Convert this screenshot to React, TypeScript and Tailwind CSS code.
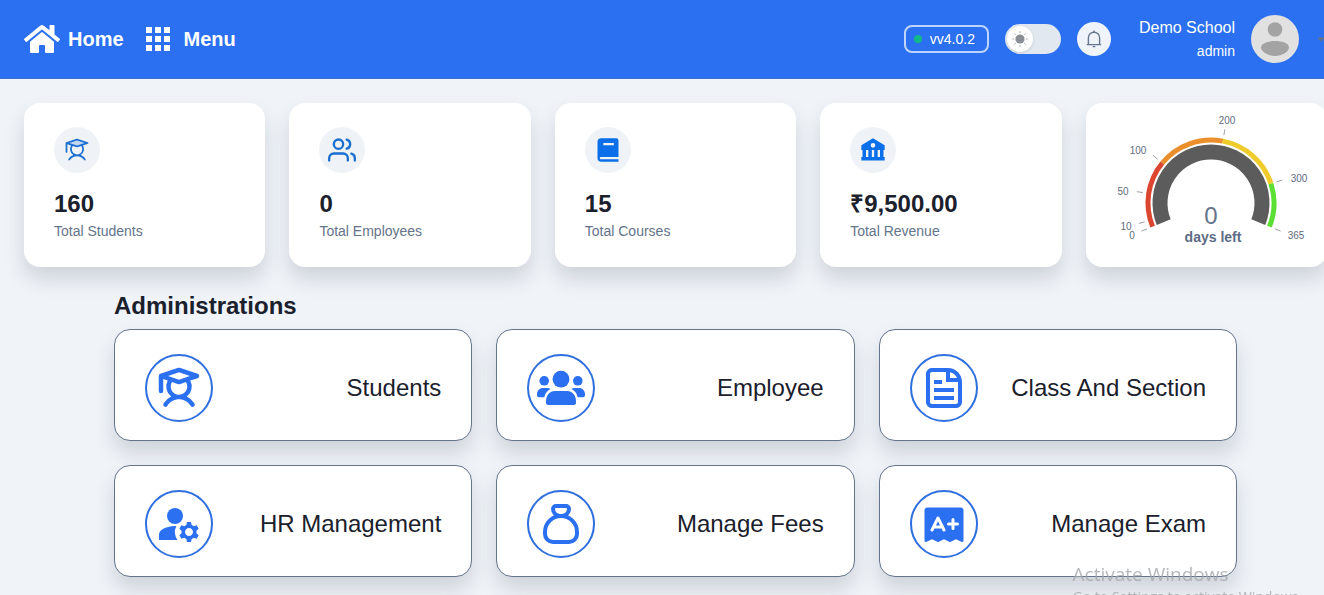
import type { ComponentType } from "react";
import type { IconType } from "react-icons";
import { BiSolidBank, BiSolidBook } from "react-icons/bi";
import { CgFileDocument } from "react-icons/cg";
import { FaCaretDown, FaHome } from "react-icons/fa";
import { FiUsers } from "react-icons/fi";
import { MdManageAccounts } from "react-icons/md";
import { PiExamFill, PiStudentBold, PiStudentDuotone } from "react-icons/pi";
import { TbMoneybag } from "react-icons/tb";

const stats: { icon: IconType; value: string; label: string; color: string }[] = [
  { icon: PiStudentDuotone, value: "160", label: "Total Students", color: "text-[#1a6fd0]" },
  { icon: FiUsers, value: "0", label: "Total Employees", color: "text-[#1a6fd0]" },
  { icon: BiSolidBook, value: "15", label: "Total Courses", color: "text-[#0a6fe8]" },
  { icon: BiSolidBank, value: "₹9,500.00", label: "Total Revenue", color: "text-[#0a6fe8]" },
];

type ModuleIcon = ComponentType<{ className?: string }>;

const modules: { icon: ModuleIcon; title: string }[] = [
  { icon: PiStudentBold, title: "Students" },
  { icon: TeamIcon, title: "Employee" },
  { icon: CgFileDocument, title: "Class And Section" },
  { icon: MdManageAccounts, title: "HR Management" },
  { icon: TbMoneybag, title: "Manage Fees" },
  { icon: PiExamFill, title: "Manage Exam" },
];

export default function App() {
  return (
    <div className="h-screen overflow-hidden bg-[#f0f4f9] font-['Liberation_Sans',Arial,sans-serif] text-[#1a202c]">
      <div className="w-[calc(100%+27px)]">
        <Header />
        <main className="px-6 pt-6">
          <section className="grid grid-cols-5 gap-6">
            {stats.map((s) => (
              <StatCard key={s.label} {...s} />
            ))}
            <div className="rounded-2xl bg-white shadow-[0_12px_20px_rgba(30,41,59,0.16)]">
              <Gauge value={0} max={365} />
            </div>
          </section>

          <section className="px-[90px] pt-6">
            <h2 className="mb-2 text-2xl leading-[30px] font-bold">Administrations</h2>
            <div className="grid grid-cols-3 gap-6">
              {modules.map((m) => (
                <ModuleCard key={m.title} {...m} />
              ))}
            </div>
          </section>
        </main>
      </div>

      <div className="pointer-events-none fixed right-[22px] bottom-0 h-8 font-['Open_Sans',sans-serif] whitespace-nowrap text-[#a3a6aa]/80">
        <div className="text-[19px] leading-[22px]">Activate Windows</div>
        <div className="text-sm leading-6">Go to Settings to activate Windows.</div>
      </div>
    </div>
  );
}

function Header() {
  return (
    <header className="flex h-[79px] items-center justify-between border-b border-[#3b6fd0] bg-[#2a70f0] px-6 text-white">
      <nav className="flex items-center gap-[22px] text-xl font-bold">
        <a href="#home" className="flex items-center gap-2">
          <FaHome className="size-9" /> Home
        </a>
        <a href="#menu" className="flex items-center gap-3.5">
          <GridIcon /> Menu
        </a>
      </nav>

      <div className="flex items-center gap-4">
        <span className="flex h-7 items-center gap-2 rounded-lg border-2 border-white/70 px-2 text-sm">
          <span className="size-2 rounded-full bg-[#12b98a]" />
          <span className="pr-1">vv4.0.2</span>
        </span>
        <button
          aria-label="Toggle theme"
          className="flex h-[30px] w-14 items-center rounded-full bg-[#e2e8f0] px-0.5"
        >
          <span className="flex size-[26px] items-center justify-center rounded-full bg-white shadow">
            <SunIcon />
          </span>
        </button>
        <button
          aria-label="Notifications"
          className="flex size-[34px] items-center justify-center rounded-full bg-[#eff4fb]"
        >
          <BellIcon />
        </button>
        <button aria-label="Account" className="ml-3 flex items-center gap-4 text-right">
          <span>
            <span className="block text-base leading-6">Demo School</span>
            <span className="block text-sm leading-[22px]">admin</span>
          </span>
          <Avatar />
          <FaCaretDown className="size-3 text-[#64748b]" />
        </button>
      </div>
    </header>
  );
}

function StatCard({
  icon: Icon,
  value,
  label,
  color,
}: {
  icon: IconType;
  value: string;
  label: string;
  color: string;
}) {
  return (
    <div className="rounded-2xl bg-white px-[30px] py-6 shadow-[0_12px_20px_rgba(30,41,59,0.16)]">
      <div className="flex size-[46px] items-center justify-center rounded-full bg-[#eff2f7]">
        <Icon className={`size-7 ${color}`} />
      </div>
      <div className="mt-4 text-2xl leading-[30px] font-bold">{value}</div>
      <div className="text-sm leading-6 text-[#64748b]">{label}</div>
    </div>
  );
}

function ModuleCard({ icon: Icon, title }: { icon: ModuleIcon; title: string }) {
  return (
    <a
      href="#module"
      className="flex items-center justify-between rounded-2xl border border-[#64748b] bg-white px-[30px] pt-6 pb-[18px] shadow-[0_12px_20px_rgba(30,41,59,0.16)]"
    >
      <span className="flex size-[68px] items-center justify-center rounded-full border-2 border-[#2f6fe0] text-[#2a70f0]">
        <Icon className="size-12" />
      </span>
      <span className="text-2xl">{title}</span>
    </a>
  );
}

/* Gauge: 224 degree sweep, opening at the bottom */
const CX = 125;
const CY = 100;

function polar(r: number, fraction: number) {
  const a = ((158 + 224 * fraction) * Math.PI) / 180;
  return { x: CX + r * Math.cos(a), y: CY + r * Math.sin(a) };
}

function arc(r: number, from: number, to: number) {
  const a = polar(r, from);
  const b = polar(r, to);
  const large = (to - from) * 224 > 180 ? 1 : 0;
  return `M${a.x} ${a.y}A${r} ${r} 0 ${large} 1 ${b.x} ${b.y}`;
}

const segments = [
  { from: 0, to: 100, color: "#dc4530" },
  { from: 100, to: 200, color: "#ea8f2c" },
  { from: 200, to: 300, color: "#efcb2c" },
  { from: 300, to: 365, color: "#5bdf33" },
];

const ticks = [
  { at: 0, x: 46, y: 136 },
  { at: 10, x: 40, y: 127 },
  { at: 50, x: 37, y: 92 },
  { at: 100, x: 52, y: 51 },
  { at: 200, x: 141, y: 21 },
  { at: 300, x: 213, y: 79 },
  { at: 365, x: 210, y: 136 },
];

function Gauge({ value, max }: { value: number; max: number }) {
  return (
    <svg width="241" height="164" viewBox="0 0 241 164" role="img" aria-label="Days left">
      {segments.map((s) => (
        <path
          key={s.from}
          d={arc(63, s.from / max, s.to / max)}
          fill="none"
          stroke={s.color}
          strokeWidth="5"
        />
      ))}
      <path d={arc(51, 0, 1)} fill="none" stroke="#5c5c5c" strokeWidth="15" />
      {ticks.map((t) => {
        const a = polar(69, t.at / max);
        const b = polar(75, t.at / max);
        return (
          <g key={t.at}>
            <line x1={a.x} y1={a.y} x2={b.x} y2={b.y} stroke="#9aa0a8" strokeWidth="1" />
            <text x={t.x} y={t.y} textAnchor="middle" fontSize="10" fill="#5f6b80">
              {t.at}
            </text>
          </g>
        );
      })}
      <text x="125" y="121" textAnchor="middle" fontSize="24" fill="#64748b">
        {value}
      </text>
      <text x="127" y="139" textAnchor="middle" fontSize="14" fontWeight="700" fill="#5b6b85">
        days left
      </text>
    </svg>
  );
}

function TeamIcon({ className }: { className?: string }) {
  return (
    <svg className={className} viewBox="0 0 48 48" fill="currentColor">
      <circle cx="24" cy="15.2" r="8.4" />
      <circle cx="7.200" cy="16.8" r="4.8" />
      <circle cx="40.8" cy="16.8" r="4.8" />
      <path d="M18 27h12c5.500 0 9 4.500 9 10.500v1.300c0 1.300-.9 2.200-2.200 2.200H11.200C9.900 41 9 40.100 9 38.800v-1.300C9 31.500 12.500 27 18 27z" />
      <path d="M6 24h4.500c1.200 0 2.200.4 3 1-3.600 1.700-5.500 4.600-6.200 8.200H2C.8 33.200 0 32.400 0 31.200V30c0-3.300 2.700-6 6-6z" />
      <path d="M42 24h-4.500c-1.200 0-2.200.4-3 1 3.600 1.700 5.500 4.600 6.200 8.200H46c1.200 0 2-.8 2-2V30c0-3.300-2.700-6-6-6z" />
    </svg>
  );
}

function GridIcon() {
  const cells = [0, 9, 18];
  return (
    <svg width="24" height="24" viewBox="0 0 24 24" fill="currentColor">
      {cells.map((y) => cells.map((x) => <rect key={`${x}-${y}`} x={x} y={y} width="6" height="6" />))}
    </svg>
  );
}

function SunIcon() {
  return (
    <svg width="16" height="16" viewBox="0 0 16 16" fill="none" stroke="#8a8f96" strokeLinecap="round">
      <circle cx="8" cy="8" r="4.6" fill="#8a8f96" stroke="none" />
      <path d="M8 .8v.6M8 14.6v.6M.8 8h.6M14.6 8h.6M2.9 2.9l.4.4M12.7 12.7l.4.4M2.9 13.1l.4-.4M12.7 3.3l.4-.4" />
    </svg>
  );
}

function BellIcon() {
  return (
    <svg width="18" height="18" viewBox="0 0 18 18" fill="none" stroke="#64748b" strokeWidth="1.4">
      <path d="M1.8 14.6h14.4M3.4 14.6V7.8a5.6 5.6 0 0 1 11.2 0v6.8" />
      <path d="M9 1v1.2M8.2 16.6h1.6" strokeLinecap="round" />
    </svg>
  );
}

function Avatar() {
  return (
    <svg width="48" height="48" viewBox="0 0 48 48">
      <circle cx="24" cy="24" r="24" fill="#e1e1e1" />
      <circle cx="24" cy="14.5" r="7.3" fill="#a3a3a3" />
      <path d="M10 32.5C10 28 17 26 24 26s14 2 14 6.5c0 4-7 8.5-14 8.5s-14-4.500-14-8.500z" fill="#a3a3a3" />
    </svg>
  );
}
